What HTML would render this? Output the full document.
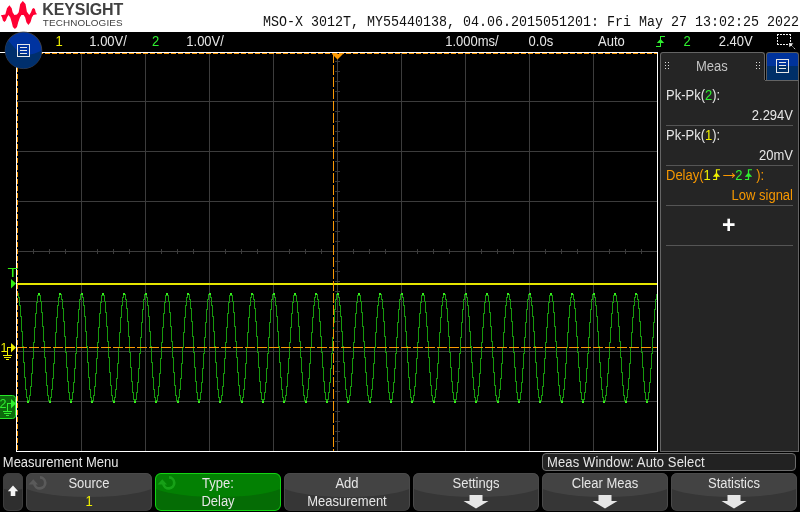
<!DOCTYPE html>
<html><head><meta charset="utf-8"><title>Keysight MSO-X 3012T</title>
<style>
html,body{margin:0;padding:0}
body{width:800px;height:512px;background:#000;position:relative;overflow:hidden;font-family:"Liberation Sans",Arial,sans-serif;font-size:13px;color:#e6e6e6}
.abs{position:absolute;white-space:nowrap}
#hdr{left:0;top:0;width:800px;height:32px;background:#fff}
#brand{left:42.3px;top:1px;font-weight:bold;font-size:16px;color:#414141;line-height:18px;letter-spacing:-0.12px}
#brand2{left:42.8px;top:16.6px;font-size:9.9px;color:#414141;line-height:11px;letter-spacing:0.12px}
#idn{left:263px;top:16px;font-family:"Liberation Mono",monospace;font-size:13.333px;line-height:16px;color:#111;transform-origin:0 100%;transform:scaleY(1.14)}
.st{top:34px;line-height:15px;font-size:13px}
.y{color:#f0f000} .g{color:#30f030} .o{color:#f89800}
#panel{left:660px;top:80px;width:137px;height:371px;background:#252525;border:1px solid #646464;border-top:none}
#tab{left:660px;top:52px;width:105px;height:29px;background:#252525;border:1px solid #646464;border-bottom:none;border-radius:3px 3px 0 0;box-sizing:border-box}
#ptop{left:765px;top:80px;width:34px;height:1px;background:#646464}
#bbtn{left:766px;top:52px;width:33px;height:28px;box-sizing:border-box;border:1px solid #5c5c5c;border-bottom:none;border-radius:3px 3px 0 0;background:linear-gradient(#00339c 0,#00339c 13px,#002f68 13px,#002f68 100%)}
.row{left:666px;width:127px;height:40px;border-bottom:1px solid #555;box-sizing:border-box}
.row .a{position:absolute;left:0;top:2.3px;line-height:15px}
.arr{display:inline-block;font-size:20px;line-height:0;margin:0 -4px 0 -3.6px;position:relative;top:-1.5px}
.row .b{position:absolute;right:0;top:21.6px;line-height:15px}
.sk{position:absolute;top:473px;width:126px;height:38px;border-radius:6px;background:#363636;overflow:hidden;text-align:center}
.sk::after{content:"";position:absolute;left:0;top:0;right:0;bottom:0;border:1px solid #4a4a4a;border-radius:6px;border-bottom-color:#3a3a3a}
.sk .gloss{position:absolute;left:-7px;top:-30px;width:140px;height:53.5px;border-radius:0 0 50% 50%/0 0 14.5px 14.5px;background:#434343}
.sk.grn{background:#056c05}
.sk.grn::after{border-color:#14d414}
.sk.grn .gloss{background:#038003}
.sk .l1{position:absolute;left:0;width:100%;top:3px;line-height:15px}
.sk .l2{position:absolute;left:0;width:100%;top:21px;line-height:15px}
.sk .dn{position:absolute;left:50px;top:22px}
.sk .knob{position:absolute;left:0px;top:0px;stroke:#5a5a5a;fill:#5a5a5a}
.sk.grn .knob{stroke:#17a017;fill:#17a017}
#root{position:absolute;left:0;top:0;width:800px;height:512px;will-change:transform}
.tx{transform:scaleY(1.077);transform-origin:0 12px}
.tx.r{transform-origin:100% 12px}
.tx.c{transform-origin:50% 12px}
</style></head><body><div id="root">
<div id="hdr" class="abs">
<svg class="abs" style="left:0;top:0" width="40" height="32" viewBox="0 0 40 32"><polygon points="0.9,15.3 5.3,14.4 7.0,8.2 9.4,5.2 11.7,8.2 12.6,12.3 14.4,14.9 17.0,14.6 18.7,12.3 20.2,4.1 22.8,0.9 25.5,4.1 26.9,11.7 29.3,14.9 31.0,12.3 32.2,9.1 33.5,7.9 34.9,9.1 35.7,12.3 37.0,14.2 33.4,14.9 31.9,17.6 30.5,22.3 28.4,24.9 26.4,22.3 25.2,17.6 23.7,14.9 21.4,14.9 19.9,17.6 18.2,22.3 17.0,26.9 14.9,29.0 12.9,26.9 11.7,22.3 10.3,17.6 8.5,14.9 7.0,17.6 5.9,20.5 4.4,22.0 2.9,20.5 2.1,17.6" fill="#ff0033"/></svg>
<div id="brand" class="abs">KEYSIGHT</div>
<div id="brand2" class="abs">TECHNOLOGIES</div>
<div id="idn" class="abs">MSO-X 3012T, MY55440138, 04.06.2015051201: Fri May 27 13:02:25 2022</div>
</div>

<div class="abs tx st y" style="left:55.5px">1</div>
<div class="abs tx st" style="left:89.3px">1.00V/</div>
<div class="abs tx st g" style="left:152px">2</div>
<div class="abs tx st" style="left:186.3px">1.00V/</div>
<div class="abs tx st" style="left:445.2px">1.000ms/</div>
<div class="abs tx st" style="left:528.6px">0.0s</div>
<div class="abs tx st" style="left:598px">Auto</div>
<div class="abs tx st g" style="left:683.5px">2</div>
<div class="abs tx st" style="left:718.7px">2.40V</div>

<svg class="abs" style="left:0;top:0" width="800" height="512" viewBox="0 0 800 512">
<rect x="0" y="52" width="17" height="1" fill="#fff"/>
<g stroke="#3c3c3c" stroke-width="1" shape-rendering="crispEdges">
<line x1="81.5" y1="52" x2="81.5" y2="451"/><line x1="145.5" y1="52" x2="145.5" y2="451"/><line x1="209.5" y1="52" x2="209.5" y2="451"/><line x1="273.5" y1="52" x2="273.5" y2="451"/><line x1="337.5" y1="52" x2="337.5" y2="451"/><line x1="401.5" y1="52" x2="401.5" y2="451"/><line x1="465.5" y1="52" x2="465.5" y2="451"/><line x1="529.5" y1="52" x2="529.5" y2="451"/><line x1="593.5" y1="52" x2="593.5" y2="451"/><line x1="16" y1="101.5" x2="657" y2="101.5"/><line x1="16" y1="151.5" x2="657" y2="151.5"/><line x1="16" y1="201.5" x2="657" y2="201.5"/><line x1="16" y1="251.5" x2="657" y2="251.5"/><line x1="16" y1="301.5" x2="657" y2="301.5"/><line x1="16" y1="351.5" x2="657" y2="351.5"/><line x1="16" y1="401.5" x2="657" y2="401.5"/>
<line x1="335" y1="61.5" x2="340" y2="61.5"/><line x1="335" y1="71.5" x2="340" y2="71.5"/><line x1="335" y1="81.5" x2="340" y2="81.5"/><line x1="335" y1="91.5" x2="340" y2="91.5"/><line x1="335" y1="111.5" x2="340" y2="111.5"/><line x1="335" y1="121.5" x2="340" y2="121.5"/><line x1="335" y1="131.5" x2="340" y2="131.5"/><line x1="335" y1="141.5" x2="340" y2="141.5"/><line x1="335" y1="161.5" x2="340" y2="161.5"/><line x1="335" y1="171.5" x2="340" y2="171.5"/><line x1="335" y1="181.5" x2="340" y2="181.5"/><line x1="335" y1="191.5" x2="340" y2="191.5"/><line x1="335" y1="211.5" x2="340" y2="211.5"/><line x1="335" y1="221.5" x2="340" y2="221.5"/><line x1="335" y1="231.5" x2="340" y2="231.5"/><line x1="335" y1="241.5" x2="340" y2="241.5"/><line x1="335" y1="261.5" x2="340" y2="261.5"/><line x1="335" y1="271.5" x2="340" y2="271.5"/><line x1="335" y1="281.5" x2="340" y2="281.5"/><line x1="335" y1="291.5" x2="340" y2="291.5"/><line x1="335" y1="311.5" x2="340" y2="311.5"/><line x1="335" y1="321.5" x2="340" y2="321.5"/><line x1="335" y1="331.5" x2="340" y2="331.5"/><line x1="335" y1="341.5" x2="340" y2="341.5"/><line x1="335" y1="361.5" x2="340" y2="361.5"/><line x1="335" y1="371.5" x2="340" y2="371.5"/><line x1="335" y1="381.5" x2="340" y2="381.5"/><line x1="335" y1="391.5" x2="340" y2="391.5"/><line x1="335" y1="411.5" x2="340" y2="411.5"/><line x1="335" y1="421.5" x2="340" y2="421.5"/><line x1="335" y1="431.5" x2="340" y2="431.5"/><line x1="335" y1="441.5" x2="340" y2="441.5"/><line x1="33.5" y1="249" x2="33.5" y2="254"/><line x1="49.5" y1="249" x2="49.5" y2="254"/><line x1="65.5" y1="249" x2="65.5" y2="254"/><line x1="97.5" y1="249" x2="97.5" y2="254"/><line x1="113.5" y1="249" x2="113.5" y2="254"/><line x1="129.5" y1="249" x2="129.5" y2="254"/><line x1="161.5" y1="249" x2="161.5" y2="254"/><line x1="177.5" y1="249" x2="177.5" y2="254"/><line x1="193.5" y1="249" x2="193.5" y2="254"/><line x1="225.5" y1="249" x2="225.5" y2="254"/><line x1="241.5" y1="249" x2="241.5" y2="254"/><line x1="257.5" y1="249" x2="257.5" y2="254"/><line x1="289.5" y1="249" x2="289.5" y2="254"/><line x1="305.5" y1="249" x2="305.5" y2="254"/><line x1="321.5" y1="249" x2="321.5" y2="254"/><line x1="353.5" y1="249" x2="353.5" y2="254"/><line x1="369.5" y1="249" x2="369.5" y2="254"/><line x1="385.5" y1="249" x2="385.5" y2="254"/><line x1="417.5" y1="249" x2="417.5" y2="254"/><line x1="433.5" y1="249" x2="433.5" y2="254"/><line x1="449.5" y1="249" x2="449.5" y2="254"/><line x1="481.5" y1="249" x2="481.5" y2="254"/><line x1="497.5" y1="249" x2="497.5" y2="254"/><line x1="513.5" y1="249" x2="513.5" y2="254"/><line x1="545.5" y1="249" x2="545.5" y2="254"/><line x1="561.5" y1="249" x2="561.5" y2="254"/><line x1="577.5" y1="249" x2="577.5" y2="254"/><line x1="609.5" y1="249" x2="609.5" y2="254"/><line x1="625.5" y1="249" x2="625.5" y2="254"/><line x1="641.5" y1="249" x2="641.5" y2="254"/>
</g>
<rect x="16.5" y="52.5" width="641" height="399" fill="none" stroke="#fff" stroke-width="1" shape-rendering="crispEdges"/>
<!-- trigger level -->
<rect x="17" y="283" width="640" height="2" fill="#e6e600"/>
<!-- waveform -->
<path d="M17.5 293V295M18.5 293V298M19.5 297V306M20.5 305V317M21.5 316V332M22.5 331V347M23.5 346V363M24.5 362V378M25.5 377V390M26.5 389V398M27.5 397V402M28.5 400V402M29.5 395V401M30.5 386V396M31.5 373V387M32.5 358V374M33.5 342V359M34.5 327V343M35.5 313V328M36.5 302V314M37.5 295V303M38.5 293V296M39.5 293V296M40.5 295V302M41.5 301V313M42.5 312V327M43.5 326V342M44.5 341V358M45.5 357V373M46.5 372V386M47.5 385V396M48.5 395V401M49.5 400V402M50.5 397V402M51.5 389V398M52.5 378V390M53.5 363V379M54.5 347V364M55.5 332V348M56.5 317V333M57.5 305V318M58.5 297V306M59.5 293V298M60.5 293V295M61.5 294V300M62.5 299V309M63.5 308V322M64.5 321V337M65.5 336V353M66.5 352V368M67.5 367V382M68.5 381V393M69.5 392V400M70.5 399V402M71.5 399V402M72.5 392V400M73.5 382V393M74.5 368V383M75.5 353V369M76.5 337V354M77.5 322V338M78.5 309V323M79.5 299V310M80.5 294V300M81.5 293V295M82.5 293V298M83.5 297V306M84.5 305V317M85.5 316V332M86.5 331V347M87.5 346V363M88.5 362V378M89.5 377V390M90.5 389V398M91.5 397V402M92.5 400V402M93.5 395V401M94.5 386V396M95.5 373V387M96.5 358V374M97.5 342V359M98.5 327V343M99.5 313V328M100.5 302V314M101.5 295V303M102.5 293V296M103.5 293V296M104.5 295V302M105.5 301V313M106.5 312V327M107.5 326V342M108.5 341V358M109.5 357V373M110.5 372V386M111.5 385V396M112.5 395V401M113.5 400V402M114.5 397V402M115.5 389V398M116.5 378V390M117.5 363V379M118.5 347V364M119.5 332V348M120.5 317V333M121.5 305V318M122.5 297V306M123.5 293V298M124.5 293V295M125.5 294V300M126.5 299V309M127.5 308V322M128.5 321V337M129.5 336V353M130.5 352V368M131.5 367V382M132.5 381V393M133.5 392V400M134.5 399V402M135.5 399V402M136.5 392V400M137.5 382V393M138.5 368V383M139.5 353V369M140.5 337V354M141.5 322V338M142.5 309V323M143.5 299V310M144.5 294V300M145.5 293V295M146.5 293V298M147.5 297V306M148.5 305V317M149.5 316V332M150.5 331V347M151.5 346V363M152.5 362V378M153.5 377V390M154.5 389V398M155.5 397V402M156.5 400V402M157.5 395V401M158.5 386V396M159.5 373V387M160.5 358V374M161.5 342V359M162.5 327V343M163.5 313V328M164.5 302V314M165.5 295V303M166.5 293V296M167.5 293V296M168.5 295V302M169.5 301V313M170.5 312V327M171.5 326V342M172.5 341V358M173.5 357V373M174.5 372V386M175.5 385V396M176.5 395V401M177.5 400V402M178.5 397V402M179.5 389V398M180.5 378V390M181.5 363V379M182.5 347V364M183.5 332V348M184.5 317V333M185.5 305V318M186.5 297V306M187.5 293V298M188.5 293V295M189.5 294V300M190.5 299V309M191.5 308V322M192.5 321V337M193.5 336V353M194.5 352V368M195.5 367V382M196.5 381V393M197.5 392V400M198.5 399V402M199.5 399V402M200.5 392V400M201.5 382V393M202.5 368V383M203.5 353V369M204.5 337V354M205.5 322V338M206.5 309V323M207.5 299V310M208.5 294V300M209.5 293V295M210.5 293V298M211.5 297V306M212.5 305V317M213.5 316V332M214.5 331V347M215.5 346V363M216.5 362V378M217.5 377V390M218.5 389V398M219.5 397V402M220.5 400V402M221.5 395V401M222.5 386V396M223.5 373V387M224.5 358V374M225.5 342V359M226.5 327V343M227.5 313V328M228.5 302V314M229.5 295V303M230.5 293V296M231.5 293V296M232.5 295V302M233.5 301V313M234.5 312V327M235.5 326V342M236.5 341V358M237.5 357V373M238.5 372V386M239.5 385V396M240.5 395V401M241.5 400V402M242.5 397V402M243.5 389V398M244.5 378V390M245.5 363V379M246.5 347V364M247.5 332V348M248.5 317V333M249.5 305V318M250.5 297V306M251.5 293V298M252.5 293V295M253.5 294V300M254.5 299V309M255.5 308V322M256.5 321V337M257.5 336V353M258.5 352V368M259.5 367V382M260.5 381V393M261.5 392V400M262.5 399V402M263.5 399V402M264.5 392V400M265.5 382V393M266.5 368V383M267.5 353V369M268.5 337V354M269.5 322V338M270.5 309V323M271.5 299V310M272.5 294V300M273.5 293V295M274.5 293V298M275.5 297V306M276.5 305V317M277.5 316V332M278.5 331V347M279.5 346V363M280.5 362V378M281.5 377V390M282.5 389V398M283.5 397V402M284.5 400V402M285.5 395V401M286.5 386V396M287.5 373V387M288.5 358V374M289.5 342V359M290.5 327V343M291.5 313V328M292.5 302V314M293.5 295V303M294.5 293V296M295.5 293V296M296.5 295V302M297.5 301V313M298.5 312V327M299.5 326V342M300.5 341V358M301.5 357V373M302.5 372V386M303.5 385V396M304.5 395V401M305.5 400V402M306.5 397V402M307.5 389V398M308.5 378V390M309.5 363V379M310.5 347V364M311.5 332V348M312.5 317V333M313.5 305V318M314.5 297V306M315.5 293V298M316.5 293V295M317.5 294V300M318.5 299V309M319.5 308V322M320.5 321V337M321.5 336V353M322.5 352V368M323.5 367V382M324.5 381V393M325.5 392V400M326.5 399V402M327.5 399V402M328.5 392V400M329.5 382V393M330.5 368V383M331.5 353V369M332.5 337V354M333.5 322V338M334.5 309V323M335.5 299V310M336.5 294V300M337.5 293V295M338.5 293V298M339.5 297V306M340.5 305V317M341.5 316V332M342.5 331V347M343.5 346V363M344.5 362V378M345.5 377V390M346.5 389V398M347.5 397V402M348.5 400V402M349.5 395V401M350.5 386V396M351.5 373V387M352.5 358V374M353.5 342V359M354.5 327V343M355.5 313V328M356.5 302V314M357.5 295V303M358.5 293V296M359.5 293V296M360.5 295V302M361.5 301V313M362.5 312V327M363.5 326V342M364.5 341V358M365.5 357V373M366.5 372V386M367.5 385V396M368.5 395V401M369.5 400V402M370.5 397V402M371.5 389V398M372.5 378V390M373.5 363V379M374.5 347V364M375.5 332V348M376.5 317V333M377.5 305V318M378.5 297V306M379.5 293V298M380.5 293V295M381.5 294V300M382.5 299V309M383.5 308V322M384.5 321V337M385.5 336V353M386.5 352V368M387.5 367V382M388.5 381V393M389.5 392V400M390.5 399V402M391.5 399V402M392.5 392V400M393.5 382V393M394.5 368V383M395.5 353V369M396.5 337V354M397.5 322V338M398.5 309V323M399.5 299V310M400.5 294V300M401.5 293V295M402.5 293V298M403.5 297V306M404.5 305V317M405.5 316V332M406.5 331V347M407.5 346V363M408.5 362V378M409.5 377V390M410.5 389V398M411.5 397V402M412.5 400V402M413.5 395V401M414.5 386V396M415.5 373V387M416.5 358V374M417.5 342V359M418.5 327V343M419.5 313V328M420.5 302V314M421.5 295V303M422.5 293V296M423.5 293V296M424.5 295V302M425.5 301V313M426.5 312V327M427.5 326V342M428.5 341V358M429.5 357V373M430.5 372V386M431.5 385V396M432.5 395V401M433.5 400V402M434.5 397V402M435.5 389V398M436.5 378V390M437.5 363V379M438.5 347V364M439.5 332V348M440.5 317V333M441.5 305V318M442.5 297V306M443.5 293V298M444.5 293V295M445.5 294V300M446.5 299V309M447.5 308V322M448.5 321V337M449.5 336V353M450.5 352V368M451.5 367V382M452.5 381V393M453.5 392V400M454.5 399V402M455.5 399V402M456.5 392V400M457.5 382V393M458.5 368V383M459.5 353V369M460.5 337V354M461.5 322V338M462.5 309V323M463.5 299V310M464.5 294V300M465.5 293V295M466.5 293V298M467.5 297V306M468.5 305V317M469.5 316V332M470.5 331V347M471.5 346V363M472.5 362V378M473.5 377V390M474.5 389V398M475.5 397V402M476.5 400V402M477.5 395V401M478.5 386V396M479.5 373V387M480.5 358V374M481.5 342V359M482.5 327V343M483.5 313V328M484.5 302V314M485.5 295V303M486.5 293V296M487.5 293V296M488.5 295V302M489.5 301V313M490.5 312V327M491.5 326V342M492.5 341V358M493.5 357V373M494.5 372V386M495.5 385V396M496.5 395V401M497.5 400V402M498.5 397V402M499.5 389V398M500.5 378V390M501.5 363V379M502.5 347V364M503.5 332V348M504.5 317V333M505.5 305V318M506.5 297V306M507.5 293V298M508.5 293V295M509.5 294V300M510.5 299V309M511.5 308V322M512.5 321V337M513.5 336V353M514.5 352V368M515.5 367V382M516.5 381V393M517.5 392V400M518.5 399V402M519.5 399V402M520.5 392V400M521.5 382V393M522.5 368V383M523.5 353V369M524.5 337V354M525.5 322V338M526.5 309V323M527.5 299V310M528.5 294V300M529.5 293V295M530.5 293V298M531.5 297V306M532.5 305V317M533.5 316V332M534.5 331V347M535.5 346V363M536.5 362V378M537.5 377V390M538.5 389V398M539.5 397V402M540.5 400V402M541.5 395V401M542.5 386V396M543.5 373V387M544.5 358V374M545.5 342V359M546.5 327V343M547.5 313V328M548.5 302V314M549.5 295V303M550.5 293V296M551.5 293V296M552.5 295V302M553.5 301V313M554.5 312V327M555.5 326V342M556.5 341V358M557.5 357V373M558.5 372V386M559.5 385V396M560.5 395V401M561.5 400V402M562.5 397V402M563.5 389V398M564.5 378V390M565.5 363V379M566.5 347V364M567.5 332V348M568.5 317V333M569.5 305V318M570.5 297V306M571.5 293V298M572.5 293V295M573.5 294V300M574.5 299V309M575.5 308V322M576.5 321V337M577.5 336V353M578.5 352V368M579.5 367V382M580.5 381V393M581.5 392V400M582.5 399V402M583.5 399V402M584.5 392V400M585.5 382V393M586.5 368V383M587.5 353V369M588.5 337V354M589.5 322V338M590.5 309V323M591.5 299V310M592.5 294V300M593.5 293V295M594.5 293V298M595.5 297V306M596.5 305V317M597.5 316V332M598.5 331V347M599.5 346V363M600.5 362V378M601.5 377V390M602.5 389V398M603.5 397V402M604.5 400V402M605.5 395V401M606.5 386V396M607.5 373V387M608.5 358V374M609.5 342V359M610.5 327V343M611.5 313V328M612.5 302V314M613.5 295V303M614.5 293V296M615.5 293V296M616.5 295V302M617.5 301V313M618.5 312V327M619.5 326V342M620.5 341V358M621.5 357V373M622.5 372V386M623.5 385V396M624.5 395V401M625.5 400V402M626.5 397V402M627.5 389V398M628.5 378V390M629.5 363V379M630.5 347V364M631.5 332V348M632.5 317V333M633.5 305V318M634.5 297V306M635.5 293V298M636.5 293V295M637.5 294V300M638.5 299V309M639.5 308V322M640.5 321V337M641.5 336V353M642.5 352V368M643.5 367V382M644.5 381V393M645.5 392V400M646.5 399V402M647.5 399V402M648.5 392V400M649.5 382V393M650.5 368V383M651.5 353V369M652.5 337V354M653.5 322V338M654.5 309V323M655.5 299V310M656.5 294V300" fill="none" stroke="#17990d" stroke-width="1" shape-rendering="crispEdges"/>
<g fill="#3af020" shape-rendering="crispEdges"><rect x="27" y="401" width="2" height="2"/><rect x="38" y="293" width="2" height="2"/><rect x="49" y="401" width="2" height="2"/><rect x="59" y="293" width="2" height="2"/><rect x="70" y="401" width="2" height="2"/><rect x="81" y="293" width="2" height="2"/><rect x="91" y="401" width="2" height="2"/><rect x="102" y="293" width="2" height="2"/><rect x="113" y="401" width="2" height="2"/><rect x="123" y="293" width="2" height="2"/><rect x="134" y="401" width="2" height="2"/><rect x="145" y="293" width="2" height="2"/><rect x="155" y="401" width="2" height="2"/><rect x="166" y="293" width="2" height="2"/><rect x="177" y="401" width="2" height="2"/><rect x="187" y="293" width="2" height="2"/><rect x="198" y="401" width="2" height="2"/><rect x="209" y="293" width="2" height="2"/><rect x="219" y="401" width="2" height="2"/><rect x="230" y="293" width="2" height="2"/><rect x="241" y="401" width="2" height="2"/><rect x="251" y="293" width="2" height="2"/><rect x="262" y="401" width="2" height="2"/><rect x="273" y="293" width="2" height="2"/><rect x="283" y="401" width="2" height="2"/><rect x="294" y="293" width="2" height="2"/><rect x="305" y="401" width="2" height="2"/><rect x="315" y="293" width="2" height="2"/><rect x="326" y="401" width="2" height="2"/><rect x="337" y="293" width="2" height="2"/><rect x="347" y="401" width="2" height="2"/><rect x="358" y="293" width="2" height="2"/><rect x="369" y="401" width="2" height="2"/><rect x="379" y="293" width="2" height="2"/><rect x="390" y="401" width="2" height="2"/><rect x="401" y="293" width="2" height="2"/><rect x="411" y="401" width="2" height="2"/><rect x="422" y="293" width="2" height="2"/><rect x="433" y="401" width="2" height="2"/><rect x="443" y="293" width="2" height="2"/><rect x="454" y="401" width="2" height="2"/><rect x="465" y="293" width="2" height="2"/><rect x="475" y="401" width="2" height="2"/><rect x="486" y="293" width="2" height="2"/><rect x="497" y="401" width="2" height="2"/><rect x="507" y="293" width="2" height="2"/><rect x="518" y="401" width="2" height="2"/><rect x="529" y="293" width="2" height="2"/><rect x="539" y="401" width="2" height="2"/><rect x="550" y="293" width="2" height="2"/><rect x="561" y="401" width="2" height="2"/><rect x="571" y="293" width="2" height="2"/><rect x="582" y="401" width="2" height="2"/><rect x="593" y="293" width="2" height="2"/><rect x="603" y="401" width="2" height="2"/><rect x="614" y="293" width="2" height="2"/><rect x="625" y="401" width="2" height="2"/><rect x="635" y="293" width="2" height="2"/><rect x="646" y="401" width="2" height="2"/></g>
<!-- cursors -->
<g stroke="#fc9a04" stroke-width="1" fill="none" shape-rendering="crispEdges">
<line x1="17" y1="53.5" x2="657" y2="53.5" stroke-dasharray="5 2"/>
<line x1="17.5" y1="53" x2="17.5" y2="451" stroke-dasharray="5 2"/>
<line x1="17" y1="347.5" x2="657" y2="347.5" stroke-dasharray="10 2"/>
<line x1="333.5" y1="53" x2="333.5" y2="451" stroke-dasharray="10 2"/>
</g>
<polygon points="332,54 343,54 337.5,59.4" fill="#fc9a04"/>
<!-- T marker -->
<text transform="translate(7.6,277) scale(1.32,1)" font-size="13" fill="#30f010" font-family="Liberation Sans, sans-serif">T</text><polygon points="11,279 16,283.5 11,288.5" fill="#30f010"/>
<!-- ch1 marker -->
<g fill="#f0f000" stroke="none">
<polygon points="11,343 16,347.5 11,352.5"/>
<rect x="7" y="347" width="4" height="1"/><rect x="7" y="347" width="1" height="8"/>
<rect x="3" y="355" width="9" height="1"/><rect x="4" y="357" width="7" height="1"/><rect x="6" y="359" width="3" height="1"/>
</g>
<text x="0.5" y="351.5" font-size="12.5" fill="#f0f000" font-family="Liberation Sans, sans-serif">1</text>
<!-- ch2 marker -->
<path d="M-2 395.5 H12.5 Q15.5 395.5 15.5 398.5 V415.5 Q15.5 418.5 12.5 418.5 H-2 Z" fill="#0c6a0c" stroke="#28e628" stroke-width="1"/>
<g fill="#30f030" stroke="none">
<polygon points="11,399 16,403.5 11,408.5"/>
<rect x="7" y="403" width="4" height="1"/><rect x="7" y="403" width="1" height="8"/>
<rect x="3" y="411" width="9" height="1"/><rect x="4" y="413" width="7" height="1"/><rect x="6" y="415" width="3" height="1"/>
</g>
<text x="-0.5" y="407.5" font-size="12.5" fill="#30f030" font-family="Liberation Sans, sans-serif">2</text>
<!-- top-left round menu button -->
<defs><clipPath id="cc"><circle cx="23.5" cy="50.3" r="18.2"/></clipPath></defs>
<circle cx="23.5" cy="50.3" r="18.3" fill="#0033a0" stroke="#4a4640" stroke-width="0.8"/>
<path clip-path="url(#cc)" d="M0 30 L6 38 L9 41.5 L14.3 47.6 L18.4 51.8 L23.3 54.2 L29.1 54.7 L34.8 53.4 L40.6 50.9 L46 48.5 V75 H0 Z" fill="#002f6c"/>
<g fill="none" stroke="#e8e8e8" stroke-width="1" shape-rendering="crispEdges"><rect x="17.5" y="44.5" width="12" height="12"/><line x1="20" y1="47.5" x2="27" y2="47.5"/><line x1="20" y1="50.5" x2="27" y2="50.5"/><line x1="20" y1="53.5" x2="27" y2="53.5"/></g>
<!-- trigger edge icon -->
<g stroke="#30f030" stroke-width="1" fill="none" shape-rendering="crispEdges"><path d="M656 46.5 H660.5 V36.5 H665"/></g><polygon points="660.5,39 664.2,43 656.8,43" fill="#30f030"/>
<!-- zoom box icon -->
<g stroke="#f0f0f0" fill="none" stroke-width="1" stroke-dasharray="2 1" shape-rendering="crispEdges"><line x1="777" y1="34.5" x2="791" y2="34.5"/><line x1="777" y1="44.5" x2="789" y2="44.5"/><line x1="777.5" y1="34" x2="777.5" y2="45"/><line x1="790.5" y1="34" x2="790.5" y2="43"/></g>
<polygon points="789,43 793.3,43.4 789.4,47.3" fill="#f0f0f0"/><line x1="791" y1="45" x2="795.6" y2="49.6" stroke="#e0e0e0" stroke-width="0.9" stroke-dasharray="1.4 0.7"/>
</svg>

<div id="tab" class="abs"></div>
<div id="panel" class="abs"></div>
<div id="ptop" class="abs"></div>
<div id="bbtn" class="abs"></div>
<svg class="abs" style="left:660px;top:52px" width="140" height="30" viewBox="0 0 140 30">
<g fill="#dcdcdc"><rect x="5" y="10" width="1" height="1"/><rect x="8" y="10" width="1" height="1"/><rect x="5" y="13" width="1" height="1"/><rect x="8" y="13" width="1" height="1"/><rect x="5" y="16" width="1" height="1"/><rect x="8" y="16" width="1" height="1"/>
<rect x="96" y="10" width="1" height="1"/><rect x="99" y="10" width="1" height="1"/><rect x="96" y="13" width="1" height="1"/><rect x="99" y="13" width="1" height="1"/><rect x="96" y="16" width="1" height="1"/><rect x="99" y="16" width="1" height="1"/></g>
<g fill="none" stroke="#e8e8e8" stroke-width="1" shape-rendering="crispEdges"><rect x="116.5" y="7.5" width="12" height="13"/><line x1="119" y1="10.5" x2="126" y2="10.5"/><line x1="119" y1="13.5" x2="126" y2="13.5"/><line x1="119" y1="16.5" x2="126" y2="16.5"/></g>
</svg>
<div class="abs tx" style="left:696px;top:59px;line-height:15px;color:#c4c4c4">Meas</div>

<div class="abs row" style="top:86px"><span class="a tx">Pk-Pk(<span class="g">2</span>):</span><span class="b tx r">2.294V</span></div>
<div class="abs row" style="top:126px"><span class="a tx">Pk-Pk(<span class="y">1</span>):</span><span class="b tx r">20mV</span></div>
<div class="abs row o" style="top:166px"><span class="a tx">Delay(<span class="y">1</span><svg width="9" height="10.2" viewBox="0 0 9 11" preserveAspectRatio="none" style="margin:0 0.5px 0 2.5px"><path d="M0 10.5 H3.5 V0.5 H7" fill="none" stroke="#f0f000" stroke-width="1.25"/><polygon points="3.5,3.2 7.2,7.6 -0.2,7.6" fill="#f0f000"/></svg><span class="arr">&#8594;</span><span class="g">2</span><svg width="9" height="10.2" viewBox="0 0 9 11" preserveAspectRatio="none" style="margin:0 1.7px 0 3px"><path d="M0 10.5 H3.5 V0.5 H7" fill="none" stroke="#30f030" stroke-width="1.25"/><polygon points="3.5,3.2 7.2,7.6 -0.2,7.6" fill="#30f030"/></svg>):</span><span class="b tx r">Low signal</span></div>
<div class="abs row" style="top:206px"></div>
<div class="abs" style="left:721.9px;top:213.7px;font-weight:bold;font-size:23px;line-height:23px;color:#fff">+</div>

<div class="abs tx" style="left:2.8px;top:455px;line-height:15px">Measurement Menu</div>
<div class="abs" style="left:542px;top:453px;width:254px;height:18px;border:1px solid #6c6c6c;border-radius:4px;background:#222;box-sizing:border-box"></div>
<div class="abs tx" style="left:547px;top:455px;line-height:15px;letter-spacing:0.13px">Meas Window: Auto Select</div>

<div class="abs" style="left:3px;top:473px;width:20px;height:38px;border-radius:6px;background:#2e2e2e;overflow:hidden;box-shadow:inset 0 0 0 1px #3c3c3c"><div style="position:absolute;left:-6px;top:-10px;width:32px;height:27px;border-radius:0 0 50% 50%/0 0 5px 5px;background:#3e3e3e"></div></div>
<svg class="abs" style="left:7px;top:485px" width="12" height="14" viewBox="0 0 12 14"><path d="M6 0.4 L11.2 6.2 H8.3 V11 H3.7 V6.2 H0.8 Z" fill="#f4f4f4"/></svg>
<div class="sk" style="left:26px"><div class="gloss"></div><svg class="knob" width="24" height="20" viewBox="0 0 24 20"><path d="M14 4.4 A5.5 5.5 0 1 1 8.3 10.6" fill="none" stroke-width="2.7"/><path d="M7.3 6.2 L2.6 11.4 L12 11.4 Z" stroke="none"/></svg><div class="l1 tx c">Source</div><div class="l2 tx c"><span class="y">1</span></div></div>
<div class="sk grn" style="left:155px"><div class="gloss"></div><svg class="knob" width="24" height="20" viewBox="0 0 24 20"><path d="M14 4.4 A5.5 5.5 0 1 1 8.3 10.6" fill="none" stroke-width="2.7"/><path d="M7.3 6.2 L2.6 11.4 L12 11.4 Z" stroke="none"/></svg><div class="l1 tx c">Type:</div><div class="l2 tx c">Delay</div></div>
<div class="sk" style="left:284px"><div class="gloss"></div><div class="l1 tx c">Add</div><div class="l2 tx c">Measurement</div></div>
<div class="sk" style="left:413px"><div class="gloss"></div><div class="l1 tx c">Settings</div><svg class="dn" width="26" height="14" viewBox="0 0 26 14"><path d="M6.5 0 H19.5 V6 H25.5 L13 13.5 L0.5 6 H6.5 Z" fill="#e6e6e6"/></svg></div>
<div class="sk" style="left:542px"><div class="gloss"></div><div class="l1 tx c">Clear Meas</div><svg class="dn" width="26" height="14" viewBox="0 0 26 14"><path d="M6.5 0 H19.5 V6 H25.5 L13 13.5 L0.5 6 H6.5 Z" fill="#e6e6e6"/></svg></div>
<div class="sk" style="left:671px"><div class="gloss"></div><div class="l1 tx c">Statistics</div><svg class="dn" width="26" height="14" viewBox="0 0 26 14"><path d="M6.5 0 H19.5 V6 H25.5 L13 13.5 L0.5 6 H6.5 Z" fill="#e6e6e6"/></svg></div>
</div></body></html>
